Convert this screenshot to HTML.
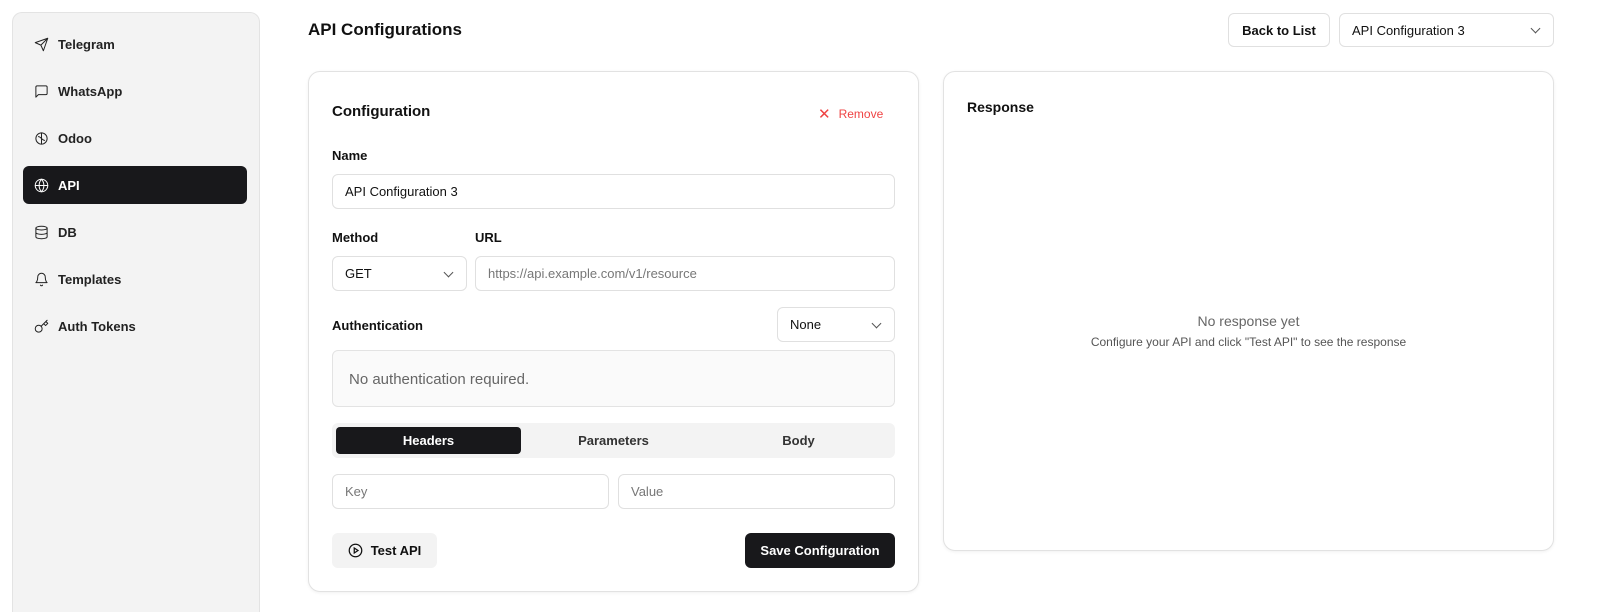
<!DOCTYPE html>
<html style="overflow:hidden;height:612px"><head><style>
*{box-sizing:border-box;margin:0;padding:0}
body{width:1600px;height:612px;background:#fff;font-family:"Liberation Sans",sans-serif;color:#111;position:relative;overflow:hidden;font-size:13px}
.abs{position:absolute}
.side{left:12px;top:12px;width:248px;height:600px;background:#f3f3f3;border:1px solid #e3e3e3;border-bottom:none;border-radius:10px 10px 0 0}
.item{position:absolute;left:23px;width:224px;height:38px;border-radius:6px;display:flex;align-items:center;padding-left:11px;font-size:13px;font-weight:bold;color:#222}
.item svg{width:15px;height:15px;margin-right:9px;fill:none;stroke:currentColor;stroke-width:1.6;stroke-linecap:round;stroke-linejoin:round}
.item.act{background:#18181b;color:#fff}
.card{border:1px solid #e2e2e2;border-radius:12px;background:#fff;box-shadow:0 1px 3px rgba(0,0,0,.06)}
.inp{position:absolute;height:35px;border:1px solid #e0e0e0;border-radius:6px;display:flex;align-items:center;padding-left:12px;font-size:13px;background:#fff}
.ph{color:#777}
.lbl{position:absolute;font-weight:bold;font-size:13px}
.chev{position:absolute;right:14px;top:12px;width:7px;height:7px;border-right:1.3px solid #555;border-bottom:1.3px solid #555;transform:rotate(45deg)}
</style></head><body>
<div class="abs side"></div>
<div class="item" style="top:25px"><svg viewBox="0 0 24 24"><path d="M22 2 11 13M22 2l-7 20-4-9-9-4z"/></svg>Telegram</div>
<div class="item" style="top:72px"><svg viewBox="0 0 24 24"><path d="M21 15a2 2 0 0 1-2 2H7l-4 4V5a2 2 0 0 1 2-2h14a2 2 0 0 1 2 2z"/></svg>WhatsApp</div>
<div class="item" style="top:119px"><svg viewBox="0 0 24 24"><circle cx="12" cy="12" r="9"/><path d="M12 3v18M7 9c2 0 3 1 5 3M17 15c-2 0-3-1-5-3"/></svg>Odoo</div>
<div class="item act" style="top:166px"><svg viewBox="0 0 24 24"><circle cx="12" cy="12" r="10"/><path d="M2 12h20M12 2a15 15 0 0 1 0 20M12 2a15 15 0 0 0 0 20"/></svg>API</div>
<div class="item" style="top:213px"><svg viewBox="0 0 24 24"><ellipse cx="12" cy="5" rx="9" ry="3"/><path d="M3 5v14c0 1.7 4 3 9 3s9-1.3 9-3V5M3 12c0 1.7 4 3 9 3s9-1.3 9-3"/></svg>DB</div>
<div class="item" style="top:260px"><svg viewBox="0 0 24 24"><path d="M6 8a6 6 0 0 1 12 0c0 7 3 9 3 9H3s3-2 3-9M10.3 21a1.9 1.9 0 0 0 3.4 0"/></svg>Templates</div>
<div class="item" style="top:307px"><svg viewBox="0 0 24 24"><circle cx="7.5" cy="15.5" r="5.5"/><path d="m21 2-9.6 9.6M15.5 7.5l3 3L22 7l-3-3"/></svg>Auth Tokens</div>

<div class="abs" style="left:308px;top:20px;font-size:17px;font-weight:bold">API Configurations</div>
<div class="abs" style="left:1228px;top:13px;width:102px;height:34px;border:1px solid #e0e0e0;border-radius:6px;font-weight:bold;display:flex;align-items:center;justify-content:center">Back to List</div>
<div class="inp" style="left:1339px;top:13px;width:215px;height:34px">API Configuration 3<span class="chev" style="top:11px"></span></div>

<div class="abs card" style="left:308px;top:71px;width:611px;height:521px"></div>
<div class="abs" style="left:332px;top:103px;font-size:15px;font-weight:bold">Configuration</div>
<div class="abs" style="left:818px;top:104px;color:#ef4444;font-size:12px"><span style="font-size:15px;margin-right:8px;position:relative;top:1px">✕</span>Remove</div>
<div class="lbl" style="left:332px;top:148px">Name</div>
<div class="inp" style="left:332px;top:174px;width:563px">API Configuration 3</div>
<div class="lbl" style="left:332px;top:230px">Method</div>
<div class="lbl" style="left:475px;top:230px">URL</div>
<div class="inp" style="left:332px;top:256px;width:135px">GET<span class="chev"></span></div>
<div class="inp ph" style="left:475px;top:256px;width:420px">https://api.example.com/v1/resource</div>
<div class="lbl" style="left:332px;top:318px">Authentication</div>
<div class="inp" style="left:777px;top:307px;width:118px">None<span class="chev"></span></div>
<div class="abs" style="left:332px;top:350px;width:563px;height:57px;border:1px solid #e3e3e3;border-radius:6px;background:#fafafa;color:#666;font-size:15px;padding:20px 16px">No authentication required.</div>
<div class="abs" style="left:332px;top:423px;width:563px;height:35px;background:#f3f3f3;border-radius:6px"></div>
<div class="abs" style="left:336px;top:427px;width:185px;height:27px;background:#18181b;color:#fff;border-radius:4px;font-weight:bold;display:flex;align-items:center;justify-content:center">Headers</div>
<div class="abs" style="left:521px;top:427px;width:185px;height:27px;font-weight:bold;color:#333;display:flex;align-items:center;justify-content:center">Parameters</div>
<div class="abs" style="left:706px;top:427px;width:185px;height:27px;font-weight:bold;color:#333;display:flex;align-items:center;justify-content:center">Body</div>
<div class="inp ph" style="left:332px;top:474px;width:277px">Key</div>
<div class="inp ph" style="left:618px;top:474px;width:277px">Value</div>
<div class="abs" style="left:332px;top:533px;width:105px;height:35px;background:#f3f3f3;border-radius:6px;font-weight:bold;display:flex;align-items:center;justify-content:center"><svg width="15" height="15" viewBox="0 0 24 24" fill="none" stroke="#111" stroke-width="2" style="margin-right:8px"><circle cx="12" cy="12" r="10"/><path d="m10 8 6 4-6 4z"/></svg>Test API</div>
<div class="abs" style="left:745px;top:533px;width:150px;height:35px;background:#18181b;color:#fff;border-radius:6px;font-weight:bold;display:flex;align-items:center;justify-content:center">Save Configuration</div>

<div class="abs card" style="left:943px;top:71px;width:611px;height:480px"></div>
<div class="abs" style="left:967px;top:99px;font-size:14px;font-weight:bold">Response</div>
<div class="abs" style="left:943px;top:313px;width:611px;text-align:center;color:#666;font-size:14px">No response yet</div>
<div class="abs" style="left:943px;top:335px;width:611px;text-align:center;color:#555;font-size:12px">Configure your API and click "Test API" to see the response</div>
</body></html>
